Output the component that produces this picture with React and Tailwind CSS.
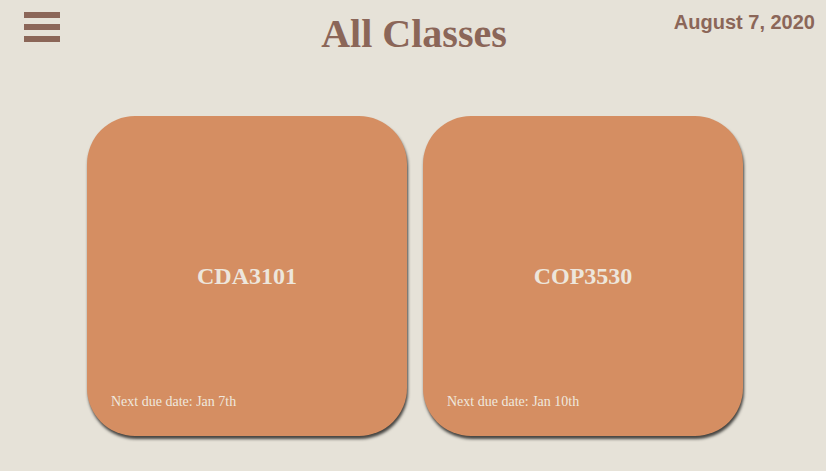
import React from 'react';

const classes = [
  { code: 'CDA3101', due: 'Jan 7th' },
  { code: 'COP3530', due: 'Jan 10th' },
];

const ClassCard = ({ code, due }) => (
  <div className="w-[320px] h-[320px] rounded-[48px] bg-[#d58e62] shadow-[1px_3px_3px_rgba(0,0,0,0.7)] flex flex-col">
    <div className="h-[41px]" />
    <div className="flex-1 flex items-center justify-center">
      <h2 className="text-[24px] font-bold leading-none text-[#ede6dc] font-['Liberation_Serif',serif]">
        {code}
      </h2>
    </div>
    <p className="pl-6 pb-[27px] text-[14px] leading-none text-[#efe8de] font-['Liberation_Serif',serif]">
      Next due date: {due}
    </p>
  </div>
);

export default function App() {
  return (
    <div className="min-h-screen w-full bg-[#e6e2d8]">
      <header className="grid grid-cols-[1fr_auto_1fr] items-start">
        <button className="justify-self-start pl-6 pt-3 flex flex-col gap-[6px]">
          <span className="block w-9 h-[6px] bg-[#8b6658]" />
          <span className="block w-9 h-[6px] bg-[#8b6658]" />
          <span className="block w-9 h-[6px] bg-[#8b6658]" />
        </button>
        <h1 className="pt-[14px] pl-[2px] text-[40px] font-bold leading-none text-[#8b6658] font-['Liberation_Serif',serif]">
          All Classes
        </h1>
        <p className="justify-self-end pr-[11px] pt-3 text-[20px] font-bold leading-none text-[#8b6658] font-['Liberation_Sans',Arial,sans-serif]">
          August 7, 2020
        </p>
      </header>

      <main className="mt-[62px] pl-1 flex justify-center gap-4">
        {classes.map((c) => (
          <ClassCard key={c.code} code={c.code} due={c.due} />
        ))}
      </main>
    </div>
  );
}
